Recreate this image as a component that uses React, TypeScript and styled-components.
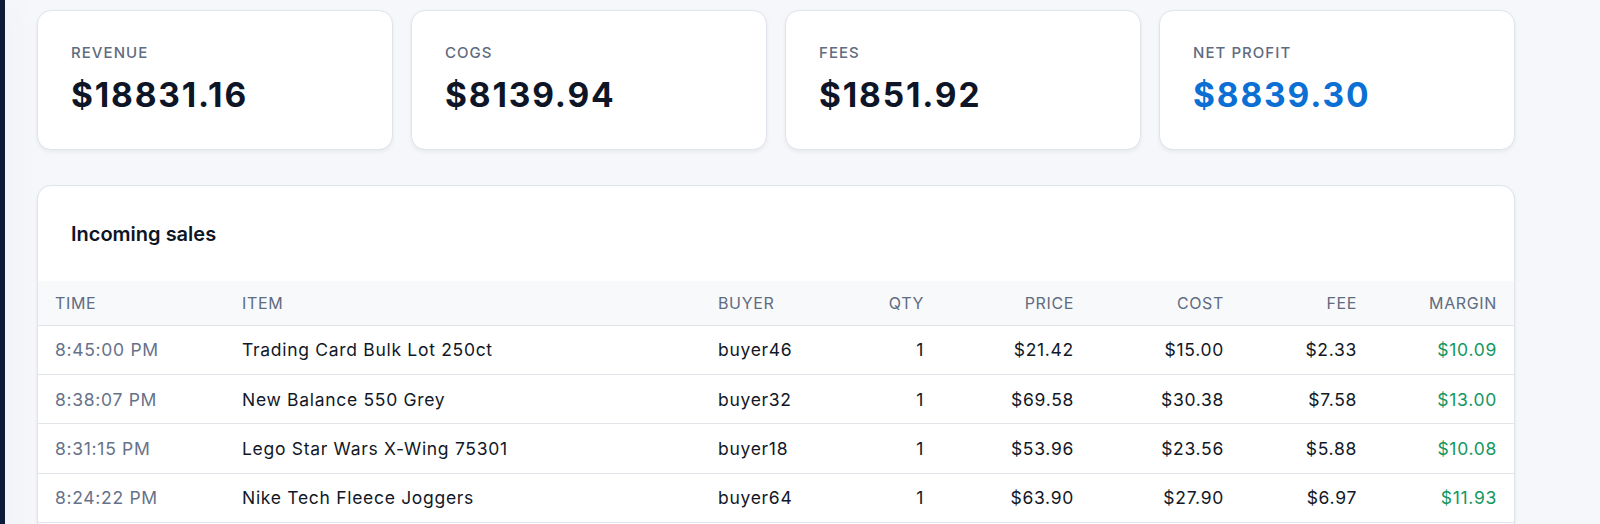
import React from 'react'
import styled, { createGlobalStyle } from 'styled-components'

const GlobalStyle = createGlobalStyle`
  html, body {
    margin: 0;
    padding: 0;
    background: #f5f7fa;
    font-family: Inter, "Noto Sans", "Liberation Sans", sans-serif;
    -webkit-font-smoothing: antialiased;
  }
  * { box-sizing: border-box; }
`

// Layout
const Shell = styled.div`
  display: flex;
  min-height: 100vh;
`

const Sidebar = styled.aside`
  width: 5px;
  flex-shrink: 0;
  background: #0c1b38;
  box-shadow: 6px 0 30px rgba(15, 23, 42, 0.09);
  position: relative;
  z-index: 1;
`

const Main = styled.main`
  flex: 1;
  padding: 10px 0 0 32px;
`

const Content = styled.div`
  width: 1478px;
  display: flex;
  flex-direction: column;
  gap: 35px;
`

// Stat cards
const StatGrid = styled.div`
  display: grid;
  grid-template-columns: repeat(4, 1fr);
  gap: 18px;
`

const StatCard = styled.div`
  background: #fff;
  border: 1px solid #dfe3ea;
  border-radius: 14px;
  box-shadow: 0 2px 4px rgba(15, 23, 42, 0.06);
  padding: 32px 33px 34px;
  height: 140px;
`

const StatLabel = styled.div`
  font-size: 15px;
  line-height: 20px;
  font-weight: 500;
  letter-spacing: 0.07em;
  text-transform: uppercase;
  color: #5f6b80;
`

const StatValue = styled.div<{ $accent?: boolean }>`
  margin-top: 12px;
  font-size: 33.5px;
  line-height: 40px;
  font-weight: 700;
  letter-spacing: 0.055em;
  color: ${p => (p.$accent ? '#0b6fd3' : '#0d1526')};
`

// Sales table
const Panel = styled.section`
  background: #fff;
  border: 1px solid #dfe3ea;
  border-radius: 14px;
  box-shadow: 0 2px 4px rgba(15, 23, 42, 0.06);
  overflow: hidden;
  padding-bottom: 24px;
`

const PanelTitle = styled.h2`
  margin: 0;
  padding: 33px 33px 32px;
  font-size: 20px;
  line-height: 30px;
  font-weight: 600;
  color: #0d1526;
`

const Table = styled.table`
  width: 100%;
  border-collapse: collapse;
  table-layout: fixed;
`

const HeadCell = styled.th<{ $right?: boolean }>`
  background: #f7f9fb;
  height: 44px;
  padding: 0 17px;
  font-size: 16px;
  font-weight: 400;
  letter-spacing: 0.04em;
  text-transform: uppercase;
  color: #5f6b80;
  text-align: ${p => (p.$right ? 'right' : 'left')};
  border-bottom: 1.5px solid #e1e5ea;
`

const Cell = styled.td<{ $right?: boolean; $tone?: 'muted' | 'green' }>`
  height: 49.4px;
  padding: 0 17px;
  font-size: 17.5px;
  letter-spacing: 0.04em;
  color: ${p => (p.$tone === 'muted' ? '#66728a' : p.$tone === 'green' ? '#14975f' : '#111827')};
  text-align: ${p => (p.$right ? 'right' : 'left')};
  border-bottom: 1.5px solid #e1e5ea;
  white-space: nowrap;
`

// Data
const stats = [
  { label: 'Revenue', value: '$18831.16' },
  { label: 'COGS', value: '$8139.94' },
  { label: 'Fees', value: '$1851.92' },
  { label: 'Net profit', value: '$8839.30', accent: true },
]

const columns = [
  { key: 'time', label: 'Time', width: 187, right: false },
  { key: 'item', label: 'Item', width: 476, right: false },
  { key: 'buyer', label: 'Buyer', width: 135, right: false },
  { key: 'qty', label: 'Qty', width: 105, right: true },
  { key: 'price', label: 'Price', width: 150, right: true },
  { key: 'cost', label: 'Cost', width: 150, right: true },
  { key: 'fee', label: 'Fee', width: 133, right: true },
  { key: 'margin', label: 'Margin', width: 140, right: true },
]

const sales = [
  { time: '8:45:00 PM', item: 'Trading Card Bulk Lot 250ct', buyer: 'buyer46', qty: 1, price: '$21.42', cost: '$15.00', fee: '$2.33', margin: '$10.09' },
  { time: '8:38:07 PM', item: 'New Balance 550 Grey', buyer: 'buyer32', qty: 1, price: '$69.58', cost: '$30.38', fee: '$7.58', margin: '$13.00' },
  { time: '8:31:15 PM', item: 'Lego Star Wars X-Wing 75301', buyer: 'buyer18', qty: 1, price: '$53.96', cost: '$23.56', fee: '$5.88', margin: '$10.08' },
  { time: '8:24:22 PM', item: 'Nike Tech Fleece Joggers', buyer: 'buyer64', qty: 1, price: '$63.90', cost: '$27.90', fee: '$6.97', margin: '$11.93' },
]

export default function App() {
  return (
    <>
      <GlobalStyle />
      <Shell>
        <Sidebar />
        <Main>
          <Content>
            <StatGrid>
              {stats.map(s => (
                <StatCard key={s.label}>
                  <StatLabel>{s.label}</StatLabel>
                  <StatValue $accent={s.accent}>{s.value}</StatValue>
                </StatCard>
              ))}
            </StatGrid>

            <Panel>
              <PanelTitle>Incoming sales</PanelTitle>
              <Table>
                <colgroup>
                  {columns.map(c => (
                    <col key={c.key} style={{ width: c.width }} />
                  ))}
                </colgroup>
                <thead>
                  <tr>
                    {columns.map(c => (
                      <HeadCell key={c.key} $right={c.right}>{c.label}</HeadCell>
                    ))}
                  </tr>
                </thead>
                <tbody>
                  {sales.map(row => (
                    <tr key={row.time}>
                      <Cell $tone="muted">{row.time}</Cell>
                      <Cell>{row.item}</Cell>
                      <Cell>{row.buyer}</Cell>
                      <Cell $right>{row.qty}</Cell>
                      <Cell $right>{row.price}</Cell>
                      <Cell $right>{row.cost}</Cell>
                      <Cell $right>{row.fee}</Cell>
                      <Cell $right $tone="green">{row.margin}</Cell>
                    </tr>
                  ))}
                </tbody>
              </Table>
            </Panel>
          </Content>
        </Main>
      </Shell>
    </>
  )
}
